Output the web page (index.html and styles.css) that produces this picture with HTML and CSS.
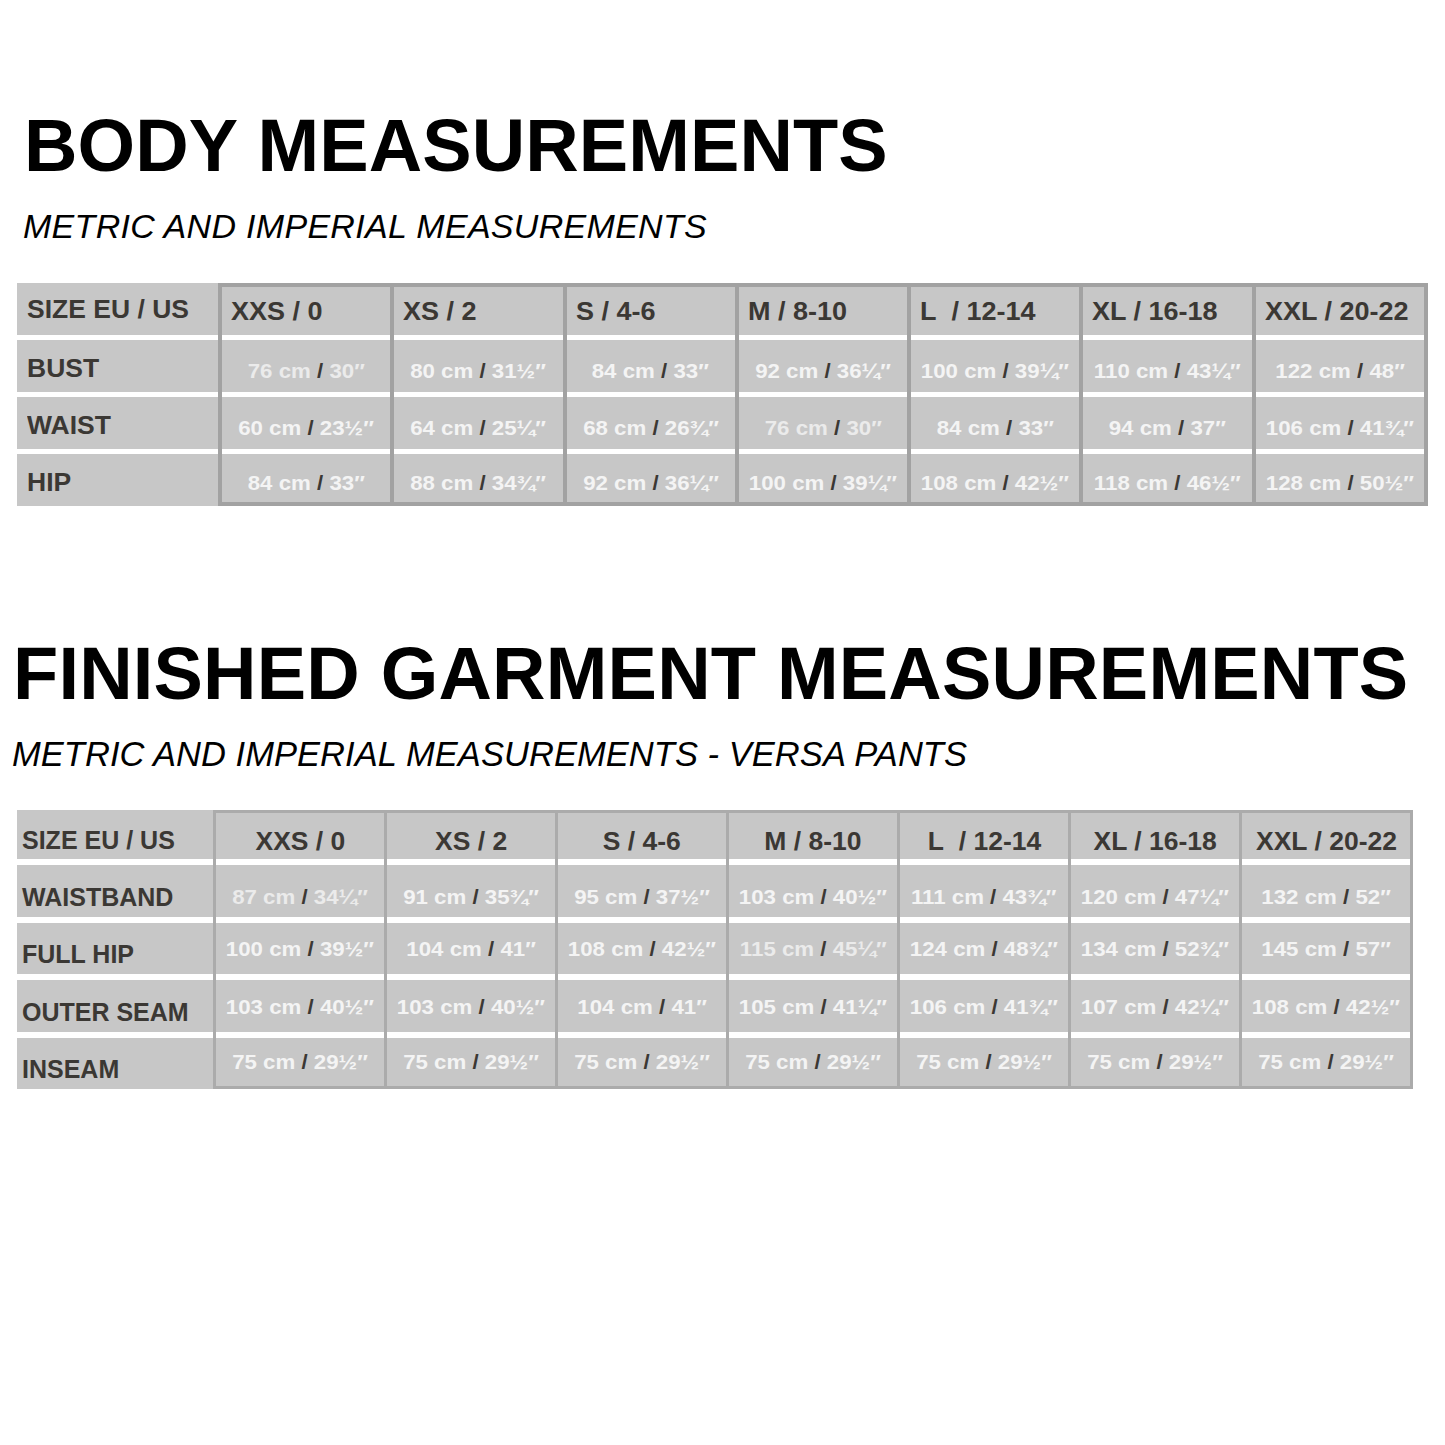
FILE: index.html
```html
<!DOCTYPE html>
<html>
<head>
<meta charset="utf-8">
<link rel="stylesheet" href="styles.css">
</head>
<body>
<section class="block">
  <h1 class="title t1">BODY MEASUREMENTS</h1>
  <p class="sub s1">METRIC AND IMPERIAL MEASUREMENTS</p>
  <div class="chart c1">
    <div class="labels">
      <div class="lab head"><span>SIZE EU / US</span></div>
      <div class="lab"><span>BUST</span></div>
      <div class="lab"><span>WAIST</span></div>
      <div class="lab"><span>HIP</span></div>
    </div>
    <div class="cols">
      <div class="col">
        <div class="cell head"><span>XXS / 0</span></div>
        <div class="cell dim"><span>76 cm <b>/</b> 30″</span></div>
        <div class="cell"><span>60 cm <b>/</b> 23½″</span></div>
        <div class="cell"><span>84 cm <b>/</b> 33″</span></div>
      </div>
      <div class="col">
        <div class="cell head"><span>XS / 2</span></div>
        <div class="cell"><span>80 cm <b>/</b> 31½″</span></div>
        <div class="cell"><span>64 cm <b>/</b> 25¼″</span></div>
        <div class="cell"><span>88 cm <b>/</b> 34¾″</span></div>
      </div>
      <div class="col">
        <div class="cell head"><span>S / 4-6</span></div>
        <div class="cell"><span>84 cm <b>/</b> 33″</span></div>
        <div class="cell"><span>68 cm <b>/</b> 26¾″</span></div>
        <div class="cell"><span>92 cm <b>/</b> 36¼″</span></div>
      </div>
      <div class="col">
        <div class="cell head"><span>M / 8-10</span></div>
        <div class="cell"><span>92 cm <b>/</b> 36¼″</span></div>
        <div class="cell dim"><span>76 cm <b>/</b> 30″</span></div>
        <div class="cell"><span>100 cm <b>/</b> 39¼″</span></div>
      </div>
      <div class="col">
        <div class="cell head"><span>L&nbsp; / 12-14</span></div>
        <div class="cell"><span>100 cm <b>/</b> 39¼″</span></div>
        <div class="cell"><span>84 cm <b>/</b> 33″</span></div>
        <div class="cell"><span>108 cm <b>/</b> 42½″</span></div>
      </div>
      <div class="col">
        <div class="cell head"><span>XL / 16-18</span></div>
        <div class="cell"><span>110 cm <b>/</b> 43¼″</span></div>
        <div class="cell"><span>94 cm <b>/</b> 37″</span></div>
        <div class="cell"><span>118 cm <b>/</b> 46½″</span></div>
      </div>
      <div class="col">
        <div class="cell head"><span>XXL / 20-22</span></div>
        <div class="cell"><span>122 cm <b>/</b> 48″</span></div>
        <div class="cell"><span>106 cm <b>/</b> 41¾″</span></div>
        <div class="cell"><span>128 cm <b>/</b> 50½″</span></div>
      </div>
    </div>
  </div>
</section>

<section class="block">
  <h1 class="title t2">FINISHED GARMENT MEASUREMENTS</h1>
  <p class="sub s2">METRIC AND IMPERIAL MEASUREMENTS - VERSA PANTS</p>
  <div class="chart c2">
    <div class="labels">
      <div class="lab head"><span>SIZE EU / US</span></div>
      <div class="lab"><span>WAISTBAND</span></div>
      <div class="lab"><span>FULL HIP</span></div>
      <div class="lab"><span>OUTER SEAM</span></div>
      <div class="lab"><span>INSEAM</span></div>
    </div>
    <div class="cols">
      <div class="col">
        <div class="cell head"><span>XXS / 0</span></div>
        <div class="cell dim"><span>87 cm <b>/</b> 34¼″</span></div>
        <div class="cell"><span>100 cm <b>/</b> 39½″</span></div>
        <div class="cell"><span>103 cm <b>/</b> 40½″</span></div>
        <div class="cell"><span>75 cm <b>/</b> 29½″</span></div>
      </div>
      <div class="col">
        <div class="cell head"><span>XS / 2</span></div>
        <div class="cell"><span>91 cm <b>/</b> 35¾″</span></div>
        <div class="cell"><span>104 cm <b>/</b> 41″</span></div>
        <div class="cell"><span>103 cm <b>/</b> 40½″</span></div>
        <div class="cell"><span>75 cm <b>/</b> 29½″</span></div>
      </div>
      <div class="col">
        <div class="cell head"><span>S / 4-6</span></div>
        <div class="cell"><span>95 cm <b>/</b> 37½″</span></div>
        <div class="cell"><span>108 cm <b>/</b> 42½″</span></div>
        <div class="cell"><span>104 cm <b>/</b> 41″</span></div>
        <div class="cell"><span>75 cm <b>/</b> 29½″</span></div>
      </div>
      <div class="col">
        <div class="cell head"><span>M / 8-10</span></div>
        <div class="cell"><span>103 cm <b>/</b> 40½″</span></div>
        <div class="cell dim"><span>115 cm <b>/</b> 45¼″</span></div>
        <div class="cell"><span>105 cm <b>/</b> 41¼″</span></div>
        <div class="cell"><span>75 cm <b>/</b> 29½″</span></div>
      </div>
      <div class="col">
        <div class="cell head"><span>L&nbsp; / 12-14</span></div>
        <div class="cell"><span>111 cm <b>/</b> 43¾″</span></div>
        <div class="cell"><span>124 cm <b>/</b> 48¾″</span></div>
        <div class="cell"><span>106 cm <b>/</b> 41¾″</span></div>
        <div class="cell"><span>75 cm <b>/</b> 29½″</span></div>
      </div>
      <div class="col">
        <div class="cell head"><span>XL / 16-18</span></div>
        <div class="cell"><span>120 cm <b>/</b> 47¼″</span></div>
        <div class="cell"><span>134 cm <b>/</b> 52¾″</span></div>
        <div class="cell"><span>107 cm <b>/</b> 42¼″</span></div>
        <div class="cell"><span>75 cm <b>/</b> 29½″</span></div>
      </div>
      <div class="col">
        <div class="cell head"><span>XXL / 20-22</span></div>
        <div class="cell"><span>132 cm <b>/</b> 52″</span></div>
        <div class="cell"><span>145 cm <b>/</b> 57″</span></div>
        <div class="cell"><span>108 cm <b>/</b> 42½″</span></div>
        <div class="cell"><span>75 cm <b>/</b> 29½″</span></div>
      </div>
    </div>
  </div>
</section>
</body>
</html>
```

FILE: styles.css
```css
html, body {
  margin: 0;
  padding: 0;
  background: #ffffff;
}

body {
  width: 1445px;
  height: 1445px;
  overflow: hidden;
  font-family: "Liberation Sans", Arial, Helvetica, sans-serif;
  color: #000;
}

.title {
  margin: 0;
  font-weight: 700;
  font-size: 74px;
  line-height: 74px;
  white-space: nowrap;
}

.t1 {
  padding: 109px 0 0 24px;
  letter-spacing: 0.1px;
}

.t2 {
  margin-top: 131px;
  padding-left: 13px;
  letter-spacing: 0.2px;
}

.sub {
  margin: 26px 0 0 0;
  font-style: italic;
  font-weight: 400;
  white-space: nowrap;
}

.s1 {
  padding-left: 23px;
  font-size: 34px;
  line-height: 34px;
  letter-spacing: 0.3px;
}

.s2 {
  padding-left: 12px;
  font-size: 34.5px;
  line-height: 35px;
  letter-spacing: 0.05px;
}

/* ---------- charts ---------- */

.chart {
  display: flex;
  margin-left: 17px;
  font-weight: 700;
}

.c1 {
  margin-top: 40px;
  width: 1411px;
}

.c2 {
  margin-top: 38px;
  width: 1396px;
}

.labels {
  display: flex;
  flex-direction: column;
  flex: none;
}

.c1 .labels { width: 201px; gap: 5px; }
.c2 .labels { width: 196px; gap: 6px; }

.lab {
  background: #c7c7c7;
  color: #3b3834;
  display: flex;
  box-sizing: border-box;
}

.lab span,
.cell span {
  display: inline-block;
  white-space: nowrap;
}

.c1 .lab {
  height: 52px;
  align-items: center;
  padding: 4px 0 0 10px;
  font-size: 25px;
}

.c1 .lab.head { padding-top: 0; }

.c1 .lab span {
  transform: scaleX(1.06);
  transform-origin: left center;
}

.c2 .lab {
  height: 51.5px;
  align-items: flex-end;
  padding: 0 0 5px 5px;
  font-size: 25px;
}

.c2 .lab.head { height: 49px; padding-bottom: 4px; }

.cols {
  display: flex;
  flex: 1;
}

.col {
  flex: 1;
  display: flex;
  flex-direction: column;
  background: #ffffff;
  border-style: solid;
}

.c1 .col {
  border-color: #a2a2a2;
  border-width: 4px 0 4px 4px;
  gap: 5px;
}

.c1 .col:last-child { border-right-width: 4px; }

.c2 .col {
  border-color: #ababab;
  border-width: 3px 0 3px 3px;
  gap: 6px;
}

.c2 .col:last-child { border-right-width: 3px; }

.cell {
  background: #c7c7c7;
  color: #f4f4f4;
  display: flex;
  align-items: center;
  justify-content: center;
  box-sizing: border-box;
  font-size: 21px;
}

.cell b {
  color: #3b3834;
  font-weight: 700;
}

.cell.dim { color: #ebebeb; }

.cell span {
  transform: scaleX(1.06);
  transform-origin: center center;
}

.cell.head {
  color: #3b3834;
  font-size: 25px;
}

/* chart 1 rows */
.c1 .cell { height: 52px; padding-top: 10px; }
.c1 .cell.head {
  height: 48px;
  padding-top: 0;
  justify-content: flex-start;
  padding-left: 9px;
}
.c1 .cell.head span { transform-origin: left center; transform: scaleX(1.08); }
.c1 .cell:last-child { height: 48px; }

/* chart 2 rows */
.c2 .cell { height: 51.5px; padding-top: 2px; }
.c2 .cell.head { height: 46px; padding-top: 10px; }
.c2 .cell:nth-child(2) { padding-top: 12px; }
.c2 .cell:last-child { height: 48.5px; padding-top: 0; }
```
